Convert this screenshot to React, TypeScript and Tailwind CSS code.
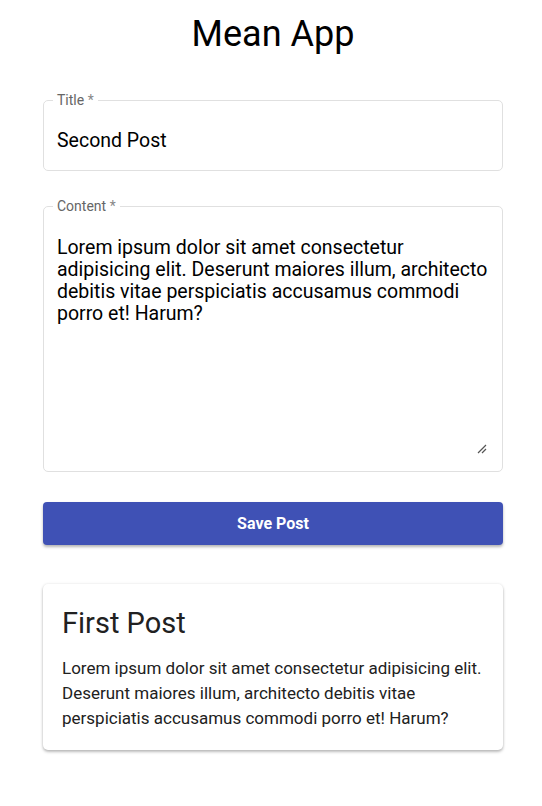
export default function App() {
  return (
    <div className="min-h-screen bg-white font-['Roboto',sans-serif] text-[#212121]">
      <div className="w-[460px] ml-[43px]">
        <h1 className="text-center text-[36px] leading-[42px] pt-[13px] text-black">Mean App</h1>

        {/* Title field */}
        <fieldset className="mt-[38px] border border-[#e0e0e0] rounded-[5px] pb-[18px]">
          <legend className="ml-[9px] px-[4px] text-[14px] leading-[14px] text-[#666666]">
            Title <span className="text-[#888888]">*</span>
          </legend>
          <div className="px-[13px] pt-[23px] text-[19.5px] leading-[22px] text-black">Second Post</div>
        </fieldset>

        {/* Content field */}
        <fieldset className="mt-[28px] border border-[#e0e0e0] rounded-[5px] pb-[16px] relative">
          <legend className="ml-[9px] px-[4px] text-[14px] leading-[14px] text-[#666666]">
            Content <span className="text-[#888888]">*</span>
          </legend>
          <div className="pl-[13px] pr-[8px] pt-[24px] h-[242px] text-[19.5px] leading-[22px] text-black whitespace-nowrap">
            Lorem ipsum dolor sit amet consectetur
            <br />
            adipisicing elit. Deserunt maiores illum, architecto
            <br />
            debitis vitae perspiciatis accusamus commodi
            <br />
            porro et! Harum?
          </div>
          <svg className="absolute right-[15px] bottom-[17px]" width="10" height="10" viewBox="0 0 10 10">
            <path d="M9 1 L1 9 M9 5 L5 9" stroke="#555" strokeWidth="1.2" />
          </svg>
        </fieldset>

        <button className="mt-[30px] w-full h-[43px] rounded-[4px] bg-[#3f51b5] text-white font-bold text-[16px] shadow-[0_2px_3px_rgba(0,0,0,0.3)]">
          Save Post
        </button>

        <div className="mt-[39px] rounded-[5px] bg-white shadow-[0_2px_3px_rgba(0,0,0,0.25),0_0_3px_rgba(0,0,0,0.1)] px-[19px] pt-[21px] pb-[19px]">
          <h2 className="text-[29px] leading-[36px] font-normal text-[#212121]">First Post</h2>
          <p className="mt-[15px] text-[17px] leading-[25px] text-[#212121]">
            Lorem ipsum dolor sit amet consectetur adipisicing elit. Deserunt maiores illum, architecto debitis vitae perspiciatis accusamus commodi porro et! Harum?
          </p>
        </div>
      </div>
    </div>
  );
}
